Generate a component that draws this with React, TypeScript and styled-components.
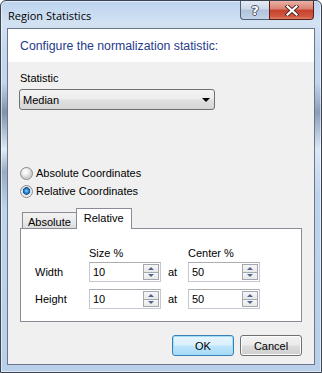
import React from "react";
import styled, { createGlobalStyle, css } from "styled-components";

const GlobalStyle = createGlobalStyle`
  html, body {
    margin: 0;
    padding: 0;
    background: #ffffff;
  }
  body {
    font-family: "Liberation Sans", Arial, sans-serif;
    font-size: 11px;
    color: #000;
  }
`;

const Window = styled.div`
  box-sizing: border-box;
  width: 322px;
  height: 373px;
  display: flex;
  flex-direction: column;
  border: 1px solid #3b4350;
  border-radius: 6px 6px 0 0;
  box-shadow: inset 0 0 0 1px rgba(255, 255, 255, 0.55);
  background:
    linear-gradient(
        180deg,
        transparent 22%,
        rgba(70, 90, 120, 0.55) 30%,
        rgba(230, 240, 250, 0.8) 40%,
        rgba(90, 110, 140, 0.4) 46%,
        transparent 56%
      )
      no-repeat 0 0 / 7px 100%,
    linear-gradient(
        180deg,
        transparent 22%,
        rgba(70, 90, 120, 0.45) 30%,
        rgba(230, 240, 250, 0.7) 40%,
        transparent 52%
      )
      no-repeat 100% 0 / 7px 100%,
    linear-gradient(180deg, #bdd3ee 0%, #d2e2f3 6%, #c3d7ee 14%, #b9cfea 100%);
`;

const TitleBar = styled.div`
  height: 27px;
  display: flex;
  align-items: flex-start;
  padding-left: 7px;
  padding-right: 7px;
  flex-shrink: 0;
`;

const TitleText = styled.span`
  font-family: "Open Sans", "Noto Sans", sans-serif;
  font-size: 11px;
  line-height: 15px;
  margin-top: 7px;
  color: #000;
`;

const TitleButtons = styled.div`
  margin-left: auto;
  display: flex;
`;

const CaptionButton = styled.div<{ $kind: "help" | "close" }>`
  box-sizing: border-box;
  height: 19px;
  display: flex;
  align-items: center;
  justify-content: center;
  border: 1px solid #4f5f76;
  border-top: none;
  ${(p) =>
    p.$kind === "help"
      ? css`
          width: 29px;
          border-right: none;
          border-radius: 0 0 0 4px;
          background: linear-gradient(
            180deg,
            #e3ebf5 0%,
            #cbd8e8 45%,
            #b0c2da 50%,
            #c3d3e7 100%
          );
        `
      : css`
          width: 45px;
          border-color: #5a2018;
          border-radius: 0 0 4px 0;
          background: linear-gradient(
            180deg,
            #eab1a6 0%,
            #d9806f 45%,
            #c6422f 50%,
            #d0563f 85%,
            #e0806a 100%
          );
        `}
`;

const HelpGlyph = styled.span`
  font-family: "DejaVu Sans", sans-serif;
  font-weight: bold;
  font-size: 13px;
  line-height: 13px;
  color: #ffffff;
  text-shadow: 1px 0 0 #4a5568, -1px 0 0 #4a5568, 0 1px 0 #4a5568,
    0 -1px 0 #4a5568;
`;

const Client = styled.div`
  flex: 1;
  display: flex;
  flex-direction: column;
  margin: 0 6px 7px 6px;
  border: 1px solid #6b7789;
  background: #f0f0f0;
`;

const Header = styled.div`
  height: 33px;
  flex-shrink: 0;
  display: flex;
  align-items: center;
  padding-left: 12px;
  background: #ffffff;
  font-size: 12.3px;
  color: #1f3b8b;
`;

const Body = styled.div`
  flex: 1;
  display: flex;
  flex-direction: column;
  padding: 10px 12px 8px 12px;
`;

const FieldLabel = styled.div`
  line-height: 13px;
`;

const Combo = styled.div`
  box-sizing: border-box;
  margin-top: 4px;
  margin-left: -1px;
  width: 196px;
  height: 21px;
  display: flex;
  align-items: center;
  padding: 0 4px 0 3px;
  border: 1px solid #707070;
  border-radius: 3px;
  background: linear-gradient(
    180deg,
    #f4f4f4 0%,
    #ececec 48%,
    #e0e0e0 52%,
    #d6d6d6 100%
  );
`;

const ComboArrow = styled.span`
  margin-left: auto;
  width: 0;
  height: 0;
  border-left: 4px solid transparent;
  border-right: 4px solid transparent;
  border-top: 4px solid #000;
`;

const RadioGroup = styled.div`
  margin-top: 54px;
  display: flex;
  flex-direction: column;
`;

const RadioRow = styled.label`
  height: 18px;
  display: flex;
  align-items: center;
`;

const RadioCircle = styled.span<{ $checked?: boolean }>`
  box-sizing: border-box;
  width: 13px;
  height: 13px;
  margin-right: 3px;
  border-radius: 50%;
  border: 1px solid #8b8b8b;
  background: ${(p) =>
    p.$checked
      ? "radial-gradient(circle at 50% 45%, #8ad3ff 0, #2a8ad4 2px, #0f4f96 3.5px, #dcdcdc 4px, #f7f7f7 6px)"
      : "radial-gradient(circle at 40% 35%, #ffffff 0, #f0f0f0 3px, #cfcfcf 6px)"};
`;

const TabStrip = styled.div`
  margin-top: 8px;
  height: 20px;
  display: flex;
  align-items: flex-end;
  padding-left: 2px;
  position: relative;
  z-index: 1;
`;

const Tab = styled.div<{ $active?: boolean }>`
  box-sizing: border-box;
  display: flex;
  align-items: center;
  border: 1px solid #898c95;
  border-bottom: none;
  ${(p) =>
    p.$active
      ? css`
          height: 21px;
          margin-bottom: -1px;
          padding: 0 7px 2px 7px;
          background: #ffffff;
        `
      : css`
          height: 16px;
          padding: 2px 5px 0 5px;
          border-right: none;
          background: linear-gradient(180deg, #f2f2f2 0%, #ebebeb 50%, #dcdcdc 100%);
        `}
`;

const TabPanel = styled.div`
  box-sizing: border-box;
  height: 94px;
  border: 1px solid #898c95;
  background: #ffffff;
  padding: 18px 0 0 14px;
  display: grid;
  grid-template-columns: 54px 72px 27px 72px;
  grid-template-rows: 13px 22px 27px;
  align-items: end;
`;

const ColHead = styled.div<{ $col: number }>`
  grid-column: ${(p) => p.$col};
  line-height: 13px;
`;

const RowLabel = styled.div`
  grid-column: 1;
  height: 20px;
  display: flex;
  align-items: center;
`;

const AtLabel = styled.div`
  height: 20px;
  display: flex;
  align-items: center;
  padding-left: 7px;
`;

const Spinner = styled.div`
  box-sizing: border-box;
  width: 72px;
  height: 20px;
  display: flex;
  border: 1px solid #c5c8d0;
  border-top-color: #abadb3;
  background: #ffffff;
`;

const SpinValue = styled.div`
  flex: 1;
  display: flex;
  align-items: center;
  padding-left: 3px;
`;

const SpinButtons = styled.div`
  display: flex;
  flex-direction: column;
  width: 16px;
  padding: 1px 1px 1px 0;
`;

const SpinButton = styled.div<{ $down?: boolean }>`
  box-sizing: border-box;
  flex: 1;
  display: flex;
  align-items: center;
  justify-content: center;
  border: 1px solid #a3a7b0;
  ${(p) => p.$down && "border-top: none;"}
  background: linear-gradient(180deg, #f6f6f6 0%, #e8e8e8 100%);

  &::after {
    content: "";
    width: 0;
    height: 0;
    border-left: 3px solid transparent;
    border-right: 3px solid transparent;
    ${(p) =>
      p.$down
        ? "border-top: 3px solid #4e6692;"
        : "border-bottom: 3px solid #4e6692;"}
  }
`;

const ButtonRow = styled.div`
  margin-top: 13px;
  display: flex;
  justify-content: flex-end;
  gap: 6px;
`;

const DialogButton = styled.div<{ $default?: boolean }>`
  box-sizing: border-box;
  width: 62px;
  height: 21px;
  display: flex;
  align-items: center;
  justify-content: center;
  border-radius: 3px;
  ${(p) =>
    p.$default
      ? css`
          border: 1px solid #3c7fb1;
          box-shadow: inset 0 0 0 1px #9ee0fb;
          background: linear-gradient(
            180deg,
            #e8f5fc 0%,
            #d9f0fc 48%,
            #bee6fd 52%,
            #a7d9f5 100%
          );
        `
      : css`
          border: 1px solid #707070;
          box-shadow: inset 0 0 0 1px #fbfbfb;
          background: linear-gradient(
            180deg,
            #f2f2f2 0%,
            #ebebeb 48%,
            #dddddd 52%,
            #cfcfcf 100%
          );
        `}
`;

function Spin({ value }: { value: string }) {
  return (
    <Spinner>
      <SpinValue>{value}</SpinValue>
      <SpinButtons>
        <SpinButton />
        <SpinButton $down />
      </SpinButtons>
    </Spinner>
  );
}

export default function App() {
  return (
    <>
      <GlobalStyle />
      <Window>
        <TitleBar>
          <TitleText>Region Statistics</TitleText>
          <TitleButtons>
            <CaptionButton $kind="help">
              <HelpGlyph>?</HelpGlyph>
            </CaptionButton>
            <CaptionButton $kind="close">
              <svg width="14" height="11" viewBox="0 0 14 11">
                <path
                  d="M2.5 1.5 L11.5 9.5 M11.5 1.5 L2.5 9.5"
                  stroke="#4a2a26"
                  strokeWidth="4"
                  strokeLinecap="square"
                />
                <path
                  d="M2.5 1.5 L11.5 9.5 M11.5 1.5 L2.5 9.5"
                  stroke="#ffffff"
                  strokeWidth="2.2"
                  strokeLinecap="square"
                />
              </svg>
            </CaptionButton>
          </TitleButtons>
        </TitleBar>
        <Client>
          <Header>Configure the normalization statistic:</Header>
          <Body>
            <FieldLabel>Statistic</FieldLabel>
            <Combo>
              Median
              <ComboArrow />
            </Combo>
            <RadioGroup>
              <RadioRow>
                <RadioCircle />
                Absolute Coordinates
              </RadioRow>
              <RadioRow>
                <RadioCircle $checked />
                Relative Coordinates
              </RadioRow>
            </RadioGroup>
            <TabStrip>
              <Tab>Absolute</Tab>
              <Tab $active>Relative</Tab>
            </TabStrip>
            <TabPanel>
              <ColHead $col={2}>Size %</ColHead>
              <ColHead $col={4}>Center %</ColHead>
              <RowLabel>Width</RowLabel>
              <Spin value="10" />
              <AtLabel>at</AtLabel>
              <Spin value="50" />
              <RowLabel>Height</RowLabel>
              <Spin value="10" />
              <AtLabel>at</AtLabel>
              <Spin value="50" />
            </TabPanel>
            <ButtonRow>
              <DialogButton $default>OK</DialogButton>
              <DialogButton>Cancel</DialogButton>
            </ButtonRow>
          </Body>
        </Client>
      </Window>
    </>
  );
}
